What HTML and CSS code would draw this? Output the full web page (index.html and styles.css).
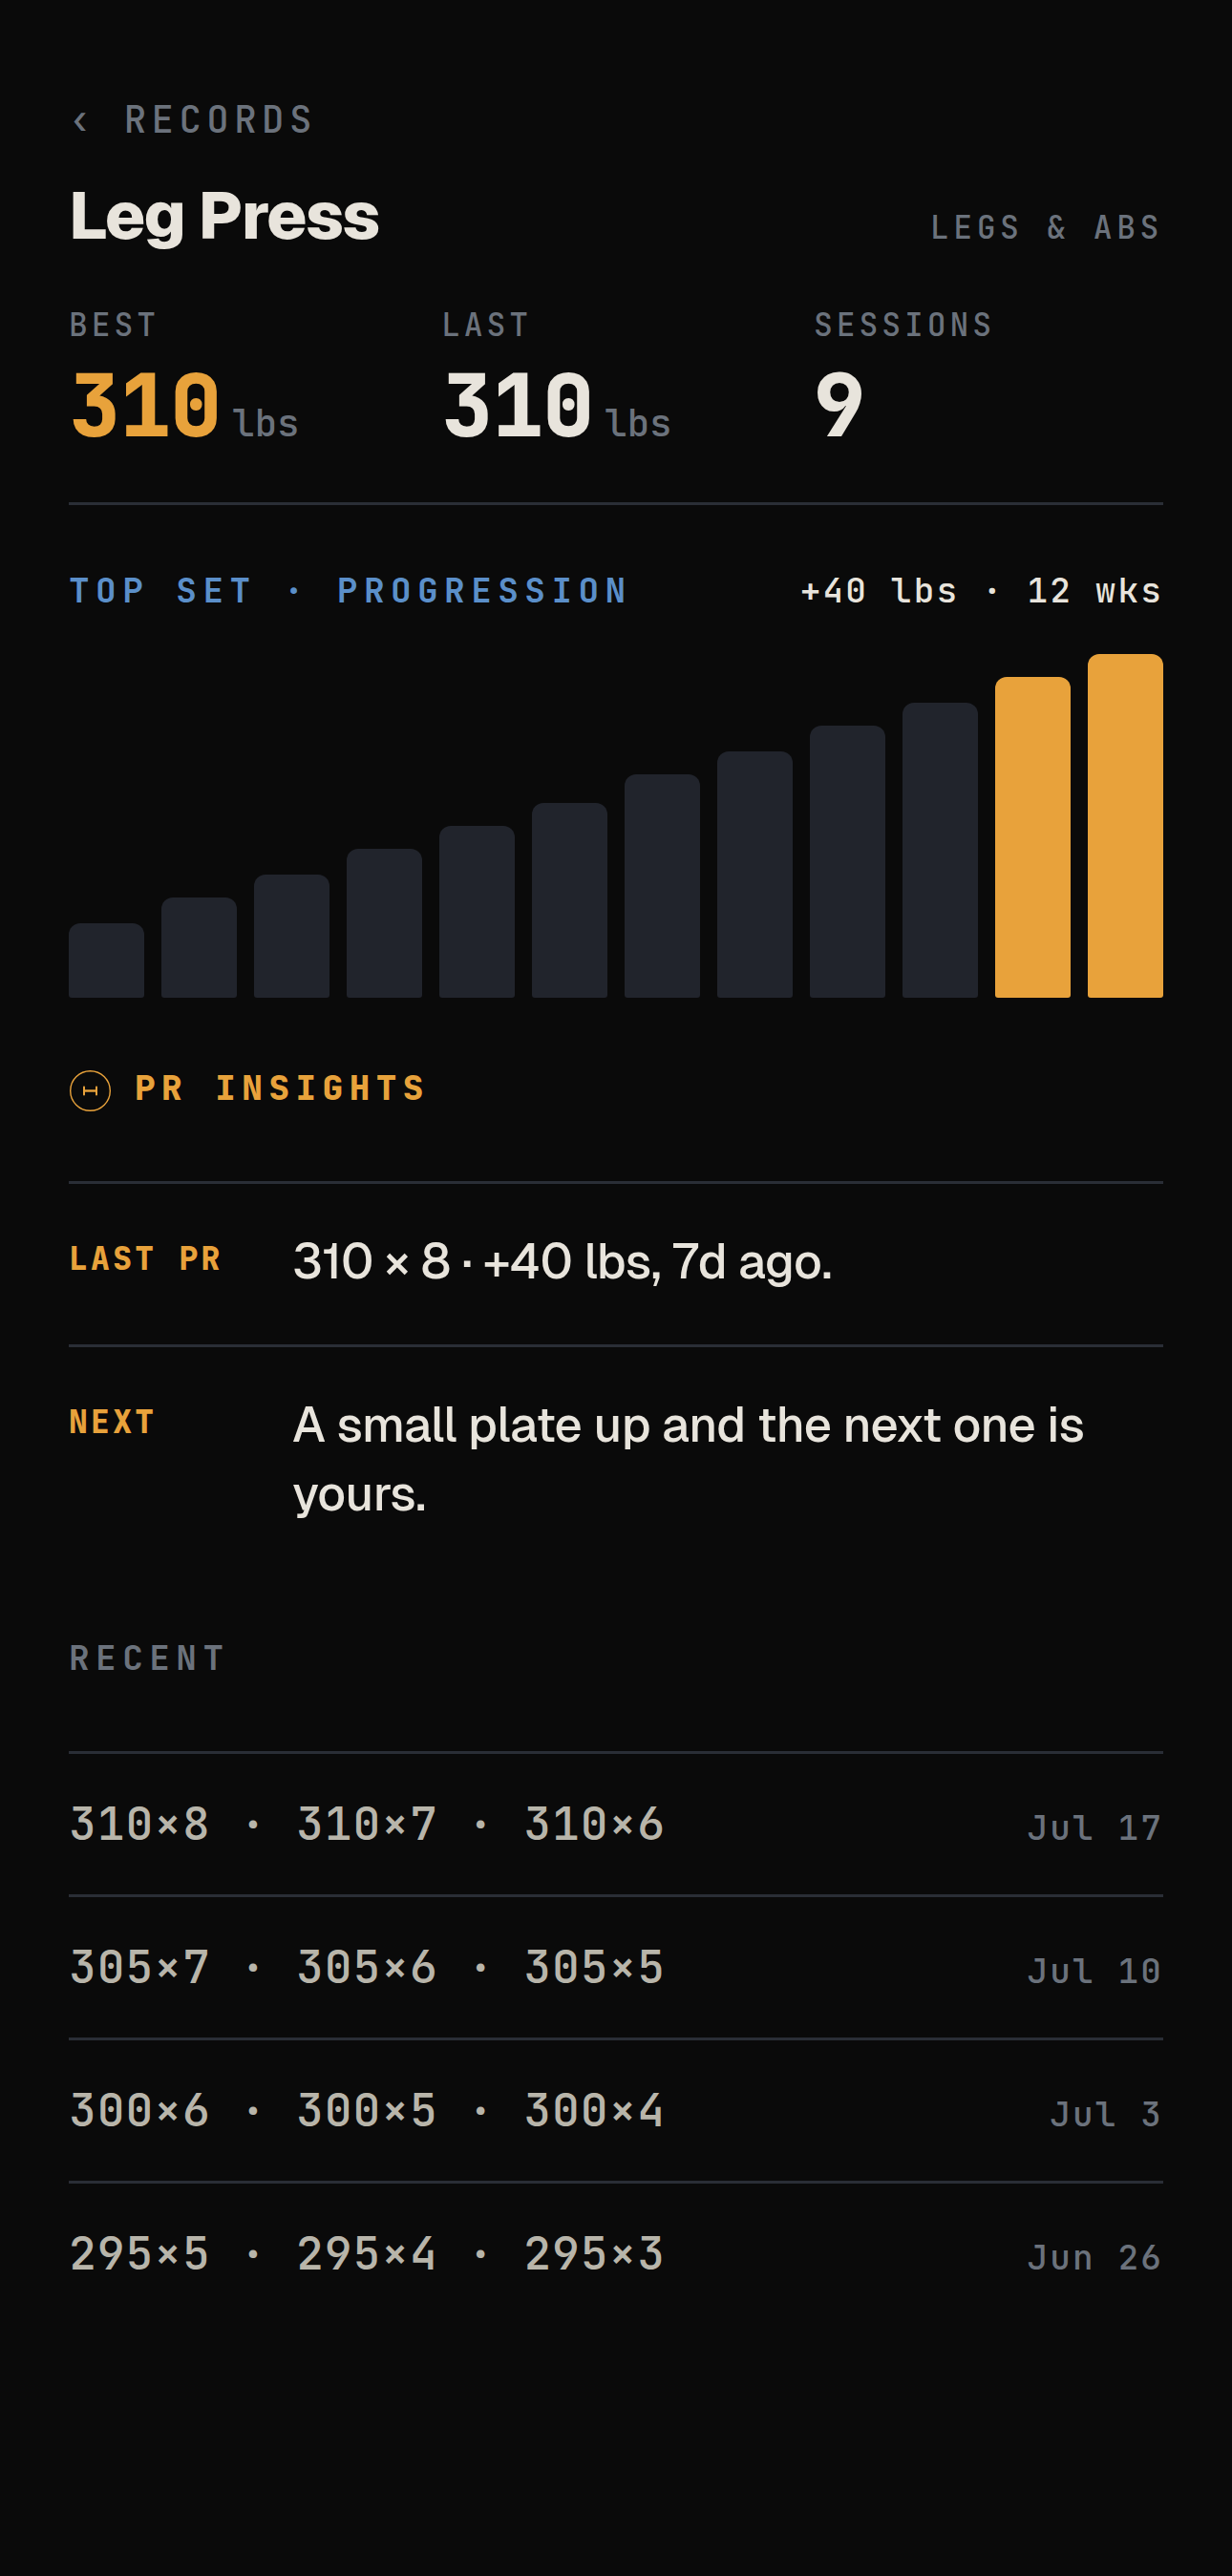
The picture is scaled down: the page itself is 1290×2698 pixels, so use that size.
FILE: index.html
```html
<!DOCTYPE html>
<html lang="en">
<head>
<meta charset="utf-8">
<meta name="viewport" content="width=device-width, initial-scale=1">
<title>Leg Press</title>
<link rel="stylesheet" href="styles.css">
</head>
<body>
<main class="page">
  <nav><a class="back" href="#records">‹ RECORDS</a></nav>
  <header class="title-row">
    <h1 class="title">Leg Press</h1>
    <span class="group">LEGS &amp; ABS</span>
  </header>

  <dl class="stats">
    <div class="stat">
      <dt class="stat-label">BEST</dt>
      <dd class="stat-value stat-value--best">310<span class="unit">lbs</span></dd>
    </div>
    <div class="stat">
      <dt class="stat-label">LAST</dt>
      <dd class="stat-value">310<span class="unit">lbs</span></dd>
    </div>
    <div class="stat">
      <dt class="stat-label">SESSIONS</dt>
      <dd class="stat-value">9</dd>
    </div>
  </dl>

  <section class="progress">
    <div class="progress-head">
      <h2 class="heading heading--blue">TOP SET · PROGRESSION</h2>
      <span class="delta">+40 lbs · 12 wks</span>
    </div>
    <div class="chart">
      <div class="bar" style="height:21.67%"></div>
      <div class="bar" style="height:29.17%"></div>
      <div class="bar" style="height:35.83%"></div>
      <div class="bar" style="height:43.33%"></div>
      <div class="bar" style="height:50%"></div>
      <div class="bar" style="height:56.67%"></div>
      <div class="bar" style="height:65%"></div>
      <div class="bar" style="height:71.67%"></div>
      <div class="bar" style="height:79.17%"></div>
      <div class="bar" style="height:85.83%"></div>
      <div class="bar bar--hot" style="height:93.33%"></div>
      <div class="bar bar--hot" style="height:100%"></div>
    </div>
  </section>

  <section class="insights">
    <div class="insights-head">
      <svg class="icon" viewBox="0 0 45 45" fill="none" stroke="currentColor" aria-hidden="true">
        <circle cx="22.5" cy="22.5" r="20.8" stroke-width="1.4"/>
        <path d="M16 22.5h13" stroke-width="2.4"/>
        <path d="M16 18.5v8M29 18.5v8" stroke-width="2" stroke-linecap="round"/>
      </svg>
      <h2 class="heading heading--amber">PR INSIGHTS</h2>
    </div>
    <dl class="notes">
      <div class="note">
        <dt class="note-label">LAST PR</dt>
        <dd class="note-text">310 × 8 · +40 lbs, 7d ago.</dd>
      </div>
      <div class="note">
        <dt class="note-label">NEXT</dt>
        <dd class="note-text">A small plate up and the next one is yours.</dd>
      </div>
    </dl>
  </section>

  <section class="recent">
    <h2 class="heading">RECENT</h2>
    <ul class="sessions">
      <li class="session"><span>310×8 · 310×7 · 310×6</span><time class="date">Jul 17</time></li>
      <li class="session"><span>305×7 · 305×6 · 305×5</span><time class="date">Jul 10</time></li>
      <li class="session"><span>300×6 · 300×5 · 300×4</span><time class="date">Jul 3</time></li>
      <li class="session"><span>295×5 · 295×4 · 295×3</span><time class="date">Jun 26</time></li>
    </ul>
  </section>
</main>
</body>
</html>
```
FILE: styles.css
```css
:root {
  --bg: #0a0a0a;
  --text: #e8e4dc;
  --soft: #b8b5aa;
  --muted: #6b727c;
  --line: #2a2e36;
  --bar: #21242c;
  --amber: #e8a23b;
  --blue: #5b8fc9;
  --mono: "JetBrains Mono", "DejaVu Sans Mono", monospace;
  --sans: Geist, Inter, sans-serif;
}

* { box-sizing: border-box; margin: 0; padding: 0; }

body {
  min-height: 100vh;
  background: var(--bg);
  color: var(--text);
  font-family: var(--mono);
  font-weight: 500;
}

.page { padding: 100px 72px; }

.back {
  display: block;
  color: var(--muted);
  font-size: 39px;
  line-height: 51px;
  letter-spacing: 0.14em;
  text-decoration: none;
}

.title-row {
  display: flex;
  align-items: baseline;
  justify-content: space-between;
  margin-top: 33px;
}

.title {
  font: 800 69px/84px var(--sans);
  letter-spacing: -0.02em;
}

.group {
  color: var(--muted);
  font-size: 33px;
  line-height: 39px;
  letter-spacing: 0.14em;
}

.stats {
  display: grid;
  grid-template-columns: repeat(3, 1fr);
  gap: 24px;
  margin-top: 53px;
  padding-bottom: 56px;
  border-bottom: 3px solid var(--line);
}

.stat-label {
  color: var(--muted);
  font-size: 33px;
  line-height: 39px;
  letter-spacing: 0.12em;
}

.stat-value {
  margin-top: 20px;
  font-size: 90px;
  font-weight: 800;
  line-height: 90px;
  letter-spacing: -0.01em;
}

.stat-value--best { color: var(--amber); }

.unit {
  margin-left: 12px;
  color: var(--muted);
  font-size: 39px;
  font-weight: 500;
  line-height: 39px;
  letter-spacing: 0;
}

.progress { margin-top: 70px; }

.progress-head {
  display: flex;
  align-items: baseline;
  justify-content: space-between;
}

.heading {
  color: var(--muted);
  font-size: 36px;
  font-weight: 700;
  line-height: 39px;
  letter-spacing: 0.18em;
}

.heading--blue { color: var(--blue); }

.heading--amber {
  color: var(--amber);
  font-weight: 800;
}

.delta {
  font-size: 36px;
  line-height: 39px;
  letter-spacing: 0.06em;
}

.chart {
  display: flex;
  align-items: flex-end;
  gap: 18px;
  height: 360px;
  margin-top: 47px;
}

.bar {
  flex: 1;
  border-radius: 12px 12px 3px 3px;
  background: var(--bar);
}

.bar--hot { background: var(--amber); }

.insights { margin-top: 75px; }

.insights-head {
  display: flex;
  align-items: flex-start;
  gap: 24px;
  color: var(--amber);
}

.icon { width: 45px; height: 45px; }

.notes { margin-top: 72px; }

.note {
  display: grid;
  grid-template-columns: 210px 1fr;
  gap: 24px;
  padding: 45px 0 51px;
  border-top: 3px solid var(--line);
}

.note-label {
  padding-top: 14px;
  color: var(--amber);
  font-size: 33px;
  font-weight: 800;
  line-height: 39px;
  letter-spacing: 0.1em;
}

.note-text {
  font: 500 51px/72px var(--sans);
  letter-spacing: -0.01em;
}

.recent { margin-top: 66px; }

.sessions {
  margin-top: 78px;
  list-style: none;
}

.session {
  display: flex;
  align-items: baseline;
  justify-content: space-between;
  padding: 41px 0 43px;
  border-top: 3px solid var(--line);
  color: var(--soft);
  font-size: 48px;
  line-height: 63px;
  letter-spacing: 0.02em;
}

.date {
  color: var(--muted);
  font-size: 36px;
  line-height: 42px;
  letter-spacing: 0.06em;
}
```
